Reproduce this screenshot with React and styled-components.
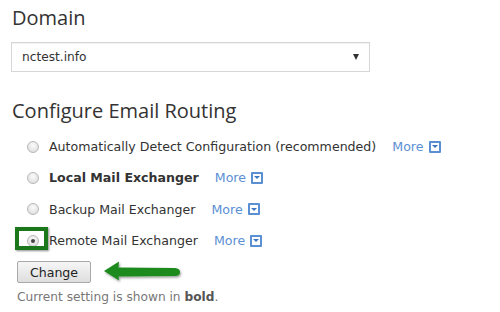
import React from "react";
import styled, { createGlobalStyle } from "styled-components";

const Global = createGlobalStyle`
  html, body { margin: 0; padding: 0; background: #fff; }
  body { width: 500px; height: 312px; overflow: hidden; }
`;

const Page = styled.div`
  padding: 5px 0 0 12px;
  font-family: "DejaVu Sans", Verdana, sans-serif;
  color: #333;
`;

const Heading = styled.h2`
  margin: 0;
  font-family: "Open Sans", sans-serif;
  font-weight: 400;
  font-size: 20px;
  line-height: 26px;
  color: #333;
`;

const SelectBox = styled.div`
  margin: 11px 0 26px -1px;
  width: 337px;
  height: 28px;
  border: 1px solid #d6d6d6;
  box-shadow: inset 0 1px 1px rgba(0, 0, 0, 0.06);
  display: flex;
  align-items: center;
  justify-content: space-between;
  padding: 0 10px 0 10px;
  box-sizing: content-box;
  font-size: 12.2px;
  color: #333;
`;

const Caret = styled.span`
  width: 0;
  height: 0;
  border-left: 3.5px solid transparent;
  border-right: 3.5px solid transparent;
  border-top: 6px solid #333;
`;

const Options = styled.div`
  margin-top: 7px;
  padding-left: 15px;
  display: flex;
  flex-direction: column;
`;

const Row = styled.div`
  display: flex;
  align-items: center;
  height: 31.3px;
  font-size: 12.6px;
`;

const RadioWrap = styled.span`
  position: relative;
  width: 12px;
  height: 12px;
  margin-right: 10px;
  flex: none;
`;

const Radio = styled.span`
  display: block;
  width: 12px;
  height: 12px;
  border-radius: 50%;
  box-sizing: border-box;
  border: 1px solid #b8b8b8;
  background: radial-gradient(circle at 50% 35%, #fafafa 0%, #e6e6e6 60%, #d4d4d4 100%);
  position: relative;
  &::after {
    content: "";
    display: ${(p) => (p.checked ? "block" : "none")};
    position: absolute;
    left: 3px;
    top: 3px;
    width: 4px;
    height: 4px;
    border-radius: 50%;
    background: #444;
  }
`;

const Highlight = styled.span`
  position: absolute;
  left: -12px;
  top: -8px;
  width: 33px;
  height: 23px;
  box-sizing: border-box;
  border: 4px solid #1a781a;
  box-shadow: 1px 1px 2px rgba(0, 0, 0, 0.45);
`;

const Label = styled.span`
  font-weight: ${(p) => (p.bold ? 700 : 400)};
  color: #333;
  white-space: nowrap;
`;

const More = styled.span`
  margin-left: 16px;
  display: flex;
  align-items: center;
  color: #5b8fd4;
  white-space: nowrap;
`;

const MoreBox = styled.span`
  margin-left: 5px;
  width: 12px;
  height: 12px;
  box-sizing: border-box;
  border: 2px solid #5b8fd4;
  border-radius: 1px;
  display: flex;
  align-items: center;
  justify-content: center;
  &::after {
    content: "";
    border-left: 3px solid transparent;
    border-right: 3px solid transparent;
    border-top: 3px solid #3f76c2;
  }
`;

const Actions = styled.div`
  display: flex;
  align-items: center;
  margin: 4px 0 0 5px;
`;

const Button = styled.button`
  width: 74px;
  height: 22px;
  font-family: "DejaVu Sans", Verdana, sans-serif;
  font-size: 12.6px;
  color: #222;
  background: linear-gradient(#f6f6f6, #dedede);
  border: 1px solid #a9a9a9;
  border-radius: 2px;
  padding: 0;
`;

const Note = styled.div`
  margin: 6px 0 0 5px;
  font-size: 12.2px;
  color: #777;
  b { color: #555; }
`;

const Arrow = () => (
  <svg width="80" height="24" viewBox="0 0 80 24" style={{ marginLeft: 12 }}>
    <defs>
      <filter id="sh" x="-10%" y="-30%" width="130%" height="170%">
        <feDropShadow dx="1" dy="1.5" stdDeviation="1" floodColor="#000" floodOpacity="0.4" />
      </filter>
    </defs>
    <path
      d="M1 11 L16 1.5 L15.5 7.5 L72 8 Q77 8.5 77 12 Q77 16 72 16 L15.5 16.5 L16 20.5 Z"
      fill="#1f8a1f"
      filter="url(#sh)"
    />
  </svg>
);

const options = [
  { label: "Automatically Detect Configuration (recommended)" },
  { label: "Local Mail Exchanger", bold: true },
  { label: "Backup Mail Exchanger" },
  { label: "Remote Mail Exchanger", checked: true, mark: true },
];

export default function App() {
  return (
    <>
      <Global />
      <Page>
        <Heading>Domain</Heading>
        <SelectBox>
          <span>nctest.info</span>
          <Caret />
        </SelectBox>
        <Heading>Configure Email Routing</Heading>
        <Options>
          {options.map((o) => (
            <Row key={o.label}>
              <RadioWrap>
                <Radio checked={o.checked} />
                {o.mark && <Highlight />}
              </RadioWrap>
              <Label bold={o.bold}>{o.label}</Label>
              <More>
                More
                <MoreBox />
              </More>
            </Row>
          ))}
        </Options>
        <Actions>
          <Button>Change</Button>
          <Arrow />
        </Actions>
        <Note>
          Current setting is shown in <b>bold</b>.
        </Note>
      </Page>
    </>
  );
}
